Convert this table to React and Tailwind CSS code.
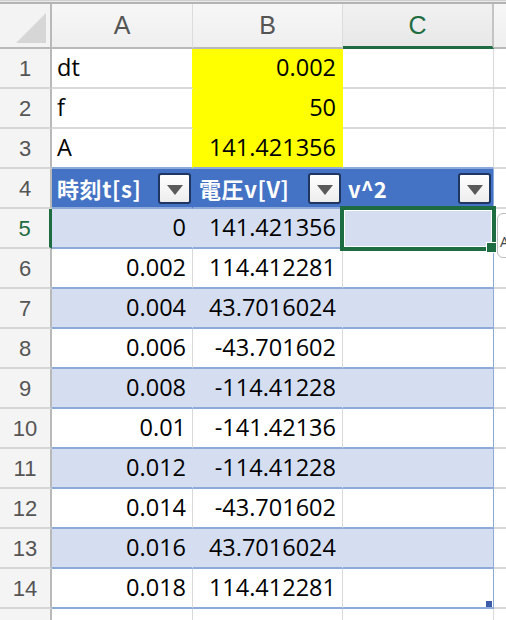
import React from "react";

const cellFont = { fontFamily: "'Open Sans', 'Noto Sans CJK JP', sans-serif" };
const headFont = { fontFamily: "'Liberation Sans', Arial, sans-serif" };
const jpFont = { fontFamily: "'Noto Sans CJK JP', 'Open Sans', sans-serif" };

const tableRows = [
    ["0", "141.421356"],
    ["0.002", "114.412281"],
    ["0.004", "43.7016024"],
    ["0.006", "-43.701602"],
    ["0.008", "-114.41228"],
    ["0.01", "-141.42136"],
    ["0.012", "-114.41228"],
    ["0.014", "-43.701602"],
    ["0.016", "43.7016024"],
    ["0.018", "114.412281"],
];

function RowHeader({ num, active }) {
    return (
        <div
            style={headFont}
            className={
                active
                    ? "flex w-[52px] shrink-0 items-center justify-center border-r-[3px] border-b-2 border-r-[#1e6c41] border-b-[#d6d6d6] bg-[#f4f4f4] text-[22px] text-[#1e6c41]"
                    : "flex w-[52px] shrink-0 items-center justify-center border-r-2 border-b-2 border-r-[#b9b9b9] border-b-[#d6d6d6] bg-[#f4f4f4] text-[22px] text-[#555]"
            }
        >
            {num}
        </div>
    );
}

function FilterButton() {
    return (
        <div className="flex h-[31px] w-[33px] shrink-0 items-center justify-center rounded-[3px] border-2 border-[#1f3660] bg-gradient-to-b from-white to-[#ededed] pt-[4px]">
            <svg width="16" height="10" viewBox="0 0 16 10">
                <path d="M0 0 L16 0 L8 10 Z" fill="#5a5a5a" />
            </svg>
        </div>
    );
}

function DataRow({ num, t, v, banded, last }) {
    const bg = banded ? "bg-[#d5def0]" : "bg-white";
    const vline = banded ? "border-r-[#d5def0]" : "border-r-[#d9d9d9]";
    return (
        <div className="flex h-[40px]" style={cellFont}>
            <RowHeader num={num} active={num === 5} />
            <div className={`flex w-[141px] shrink-0 items-center justify-end border-r border-b-2 border-b-[#8eaadb] pr-[6px] text-[23.5px] text-black ${bg} ${vline}`}>
                {t}
            </div>
            <div className={`flex w-[150px] shrink-0 items-center justify-end border-r border-b-2 border-b-[#8eaadb] pr-[6px] text-[23.5px] text-black ${bg} ${vline}`}>
                {v}
            </div>
            <div className={`relative w-[151px] shrink-0 border-r border-b-2 border-r-[#8eaadb] border-b-[#8eaadb] ${bg}`}>
                {num === 5 && (
                    <div className="absolute -top-[3px] -left-[3px] z-10 h-[45px] w-[156px] border-4 border-[#1e6c41]">
                        <div className="h-full w-full border border-white" />
                        <div className="absolute top-[32px] left-[142px] h-[11px] w-[11px] border border-white bg-[#1e6c41]" />
                    </div>
                )}
                {last && <div className="absolute right-[1px] bottom-0 h-[6px] w-[6px] bg-[#3b5ca8]" />}
            </div>
            <div className="relative flex-1 border-b-2 border-b-[#d6d6d6] bg-white">
                {num === 5 && (
                    <div className="absolute top-[4px] left-[3px] z-10 flex h-[45px] w-[30px] items-end rounded-md border border-[#bdbdbd] bg-white pb-[8px] pl-[2px] text-[14px] leading-none text-[#444]">
                        A
                    </div>
                )}
            </div>
        </div>
    );
}

export default function App() {
    return (
        <div className="relative h-[620px] w-[506px] overflow-hidden bg-white">
            {/* window top edge */}
            <div className="h-[4px] border-t border-b-2 border-t-[#cfcfcf] border-b-[#b3b3b3] bg-[#e9e9e9]" />

            {/* column headers */}
            <div className="flex h-[45px]" style={headFont}>
                <div className="flex w-[52px] shrink-0 items-end justify-end border-r-2 border-b-2 border-[#b9b9b9] bg-[#f3f3f3] pr-[4px] pb-[4px]">
                    <svg width="30" height="30" viewBox="0 0 30 30">
                        <path d="M30 0 L30 30 L0 30 Z" fill="#d6d6d6" />
                    </svg>
                </div>
                <div className="flex w-[141px] shrink-0 items-center justify-center border-r border-b-2 border-r-[#dcdcdc] border-b-[#b9b9b9] bg-gradient-to-b from-[#f7f7f7] to-[#efefef] text-[25px] text-[#555]">
                    A
                </div>
                <div className="flex w-[150px] shrink-0 items-center justify-center border-r border-b-2 border-r-[#dcdcdc] border-b-[#b9b9b9] bg-gradient-to-b from-[#f7f7f7] to-[#efefef] text-[25px] text-[#555]">
                    B
                </div>
                <div className="flex w-[151px] shrink-0 items-center justify-center border-r-2 border-b-[3px] border-r-[#c4c4c4] border-b-[#1e6c41] bg-gradient-to-b from-[#f1f1f1] to-[#e8e8e8] pt-[1px] text-[25px] text-[#1e6c41]">
                    C
                </div>
                <div className="flex-1 border-b-2 border-b-[#b9b9b9] bg-gradient-to-b from-[#f7f7f7] to-[#efefef]" />
            </div>

            {/* parameter rows */}
            {[
                [1, "dt", "0.002"],
                [2, "f", "50"],
                [3, "A", "141.421356"],
            ].map(([num, label, value]) => (
                <div key={num} className="flex h-[40px]" style={cellFont}>
                    <RowHeader num={num} />
                    <div
                        className={
                            num === 3
                                ? "flex w-[141px] shrink-0 items-center border-r border-b-2 border-r-[#ffff00] border-b-[#8eaadb] bg-white pl-[5px] text-[23.5px] text-black"
                                : "flex w-[141px] shrink-0 items-center border-r border-b-2 border-r-[#ffff00] border-b-[#d9d9d9] bg-white pl-[5px] text-[23.5px] text-black"
                        }
                    >
                        {label}
                    </div>
                    <div
                        className={
                            num === 3
                                ? "flex w-[150px] shrink-0 items-center justify-end border-r border-b-2 border-r-[#ffff00] border-b-[#8eaadb] bg-[#ffff00] pr-[6px] text-[23.5px] text-black"
                                : "flex w-[150px] shrink-0 items-center justify-end border-r border-b-2 border-[#ffff00] bg-[#ffff00] pr-[6px] text-[23.5px] text-black"
                        }
                    >
                        {value}
                    </div>
                    <div
                        className={
                            num === 3
                                ? "w-[151px] shrink-0 border-r border-b-2 border-r-[#d9d9d9] border-b-[#8eaadb] bg-white"
                                : "w-[151px] shrink-0 border-r border-b-2 border-[#d9d9d9] bg-white"
                        }
                    />
                    <div className="flex-1 border-b-2 border-b-[#d9d9d9] bg-white" />
                </div>
            ))}

            {/* table header row */}
            <div className="flex h-[40px]" style={jpFont}>
                <RowHeader num={4} />
                <div className="flex w-[141px] shrink-0 items-center justify-between border-r border-b-2 border-r-[#4472c4] border-b-[#8eaadb] bg-[#4472c4] pr-[1px] pl-[5px]">
                    <span className="text-[22px] font-bold tracking-[0.6px] text-white">時刻t[s]</span>
                    <FilterButton />
                </div>
                <div className="flex w-[150px] shrink-0 items-center justify-between border-r border-b-2 border-r-[#4472c4] border-b-[#8eaadb] bg-[#4472c4] pr-[1px] pl-[6px]">
                    <span className="text-[22px] font-bold tracking-[0.6px] text-white">電圧v[V]</span>
                    <FilterButton />
                </div>
                <div className="flex w-[151px] shrink-0 items-center justify-between border-r border-b-2 border-r-[#8eaadb] border-b-[#8eaadb] bg-[#4472c4] pr-[2px] pl-[5px]">
                    <span className="text-[22px] font-bold text-white">v^2</span>
                    <FilterButton />
                </div>
                <div className="flex-1 border-b-2 border-b-[#d9d9d9] bg-white" />
            </div>

            {tableRows.map(([t, v], i) => (
                <DataRow key={i} num={i + 5} t={t} v={v} banded={i % 2 === 0} last={i === tableRows.length - 1} />
            ))}

            {/* partial row 15 */}
            <div className="flex h-[40px]">
                <div className="w-[52px] shrink-0 border-r-2 border-r-[#b9b9b9] bg-[#f4f4f4]" />
                <div className="w-[141px] shrink-0 border-r border-r-[#d9d9d9] bg-white" />
                <div className="w-[150px] shrink-0 border-r border-r-[#d9d9d9] bg-white" />
                <div className="w-[151px] shrink-0 border-r border-r-[#d9d9d9] bg-white" />
                <div className="flex-1 bg-white" />
            </div>
        </div>
    );
}
